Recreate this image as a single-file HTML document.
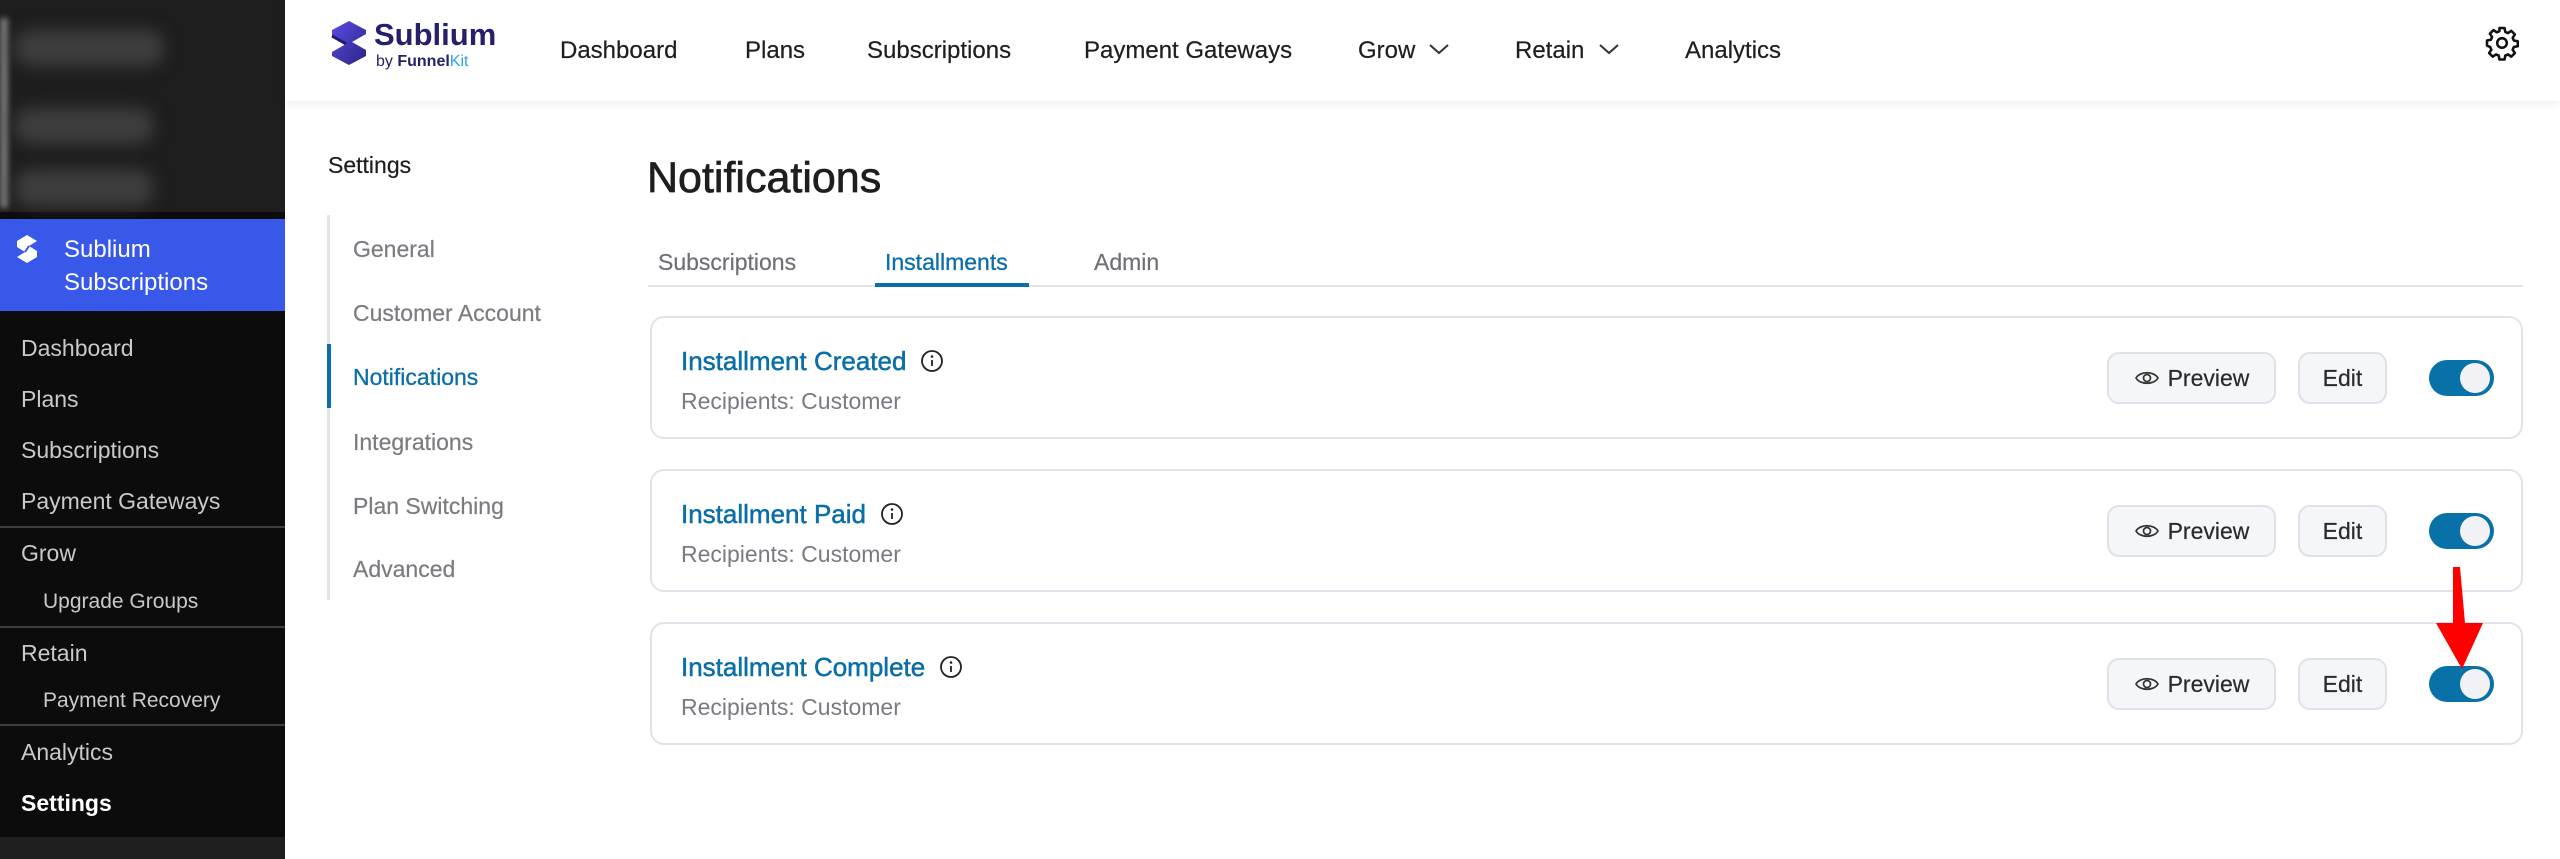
<!DOCTYPE html>
<html><head><meta charset="utf-8"><style>
*{box-sizing:border-box;margin:0;padding:0}
body{width:2560px;height:859px;overflow:hidden;background:#fff;font-family:"Liberation Sans",sans-serif;position:relative}
.abs{position:absolute;white-space:nowrap}
#side{position:absolute;left:0;top:0;width:285px;height:859px;background:#0c0c0c}
.si{position:absolute;left:21px;color:#c9c9cb;font-size:23px;line-height:30px}
.sub{left:43px;font-size:21px}
.sep{position:absolute;left:0;width:285px;height:2px;background:#3a3f44}
#hdr{position:absolute;left:285px;top:0;width:2275px;height:101px;background:#fff;box-shadow:0 3px 8px rgba(0,0,0,0.07)}
.nav{position:absolute;top:36px;font-size:24px;color:#1e1e1e;line-height:30px;-webkit-text-stroke:0.2px #1e1e1e}
.sn{position:absolute;left:353px;font-size:23px;color:#7b7b80;line-height:30px;-webkit-text-stroke:0.2px #7b7b80}
.card{position:absolute;left:650px;width:1873px;height:123px;border:2px solid #e2e2ea;border-radius:14px;background:#fff}
.ct{position:absolute;left:29px;top:27px;font-size:26px;color:#0a6ea8;line-height:32px;white-space:nowrap;-webkit-text-stroke:0.5px #0a6ea8}
.ct svg{vertical-align:-3px;margin-left:14px}
.cr{position:absolute;left:29px;top:68px;font-size:23px;color:#7a7a82;line-height:30px}
.btn{position:absolute;top:34px;height:52px;border:2px solid #e0e0e8;border-radius:12px;background:#f5f6f8;font-size:23px;color:#2a2a2a;display:flex;align-items:center;justify-content:center;-webkit-text-stroke:0.2px #2a2a2a}
.tg{position:absolute;left:1777px;top:42px;width:65px;height:36px;border-radius:18px;background:#0872a8}
.tg::after{content:"";position:absolute;right:4px;top:3px;width:30px;height:30px;border-radius:50%;background:#f2f2f6}
</style></head><body>
<div id="side">
 <div style="position:absolute;left:0;top:0;width:285px;height:212px;background:#1e1e1e"></div>
 <div style="position:absolute;left:0;top:18px;width:8px;height:190px;background:#777;filter:blur(3px)"></div>
 <div style="position:absolute;left:14px;top:30px;width:150px;height:36px;border-radius:18px;background:#3e3e3e;filter:blur(8px)"></div>
 <div style="position:absolute;left:14px;top:108px;width:140px;height:36px;border-radius:18px;background:#3e3e3e;filter:blur(8px)"></div>
 <div style="position:absolute;left:14px;top:170px;width:140px;height:36px;border-radius:18px;background:#3e3e3e;filter:blur(8px)"></div>
 <div style="position:absolute;left:0;top:219px;width:285px;height:92px;background:#3858e9"></div>
 <svg class="abs" style="left:16px;top:234px" width="22" height="30" viewBox="0 0 22 30"><path d="M11 1 L21 7 L13 12 L21 17 L21 23 L11 29 L1 23 L9 18 L1 13 L1 7 Z" fill="#fff"/><path d="M9 18 L13 12" stroke="#3858e9" stroke-width="2"/></svg>
 <div class="si" style="left:64px;top:235px;color:#fff;font-size:24px">Sublium</div>
 <div class="si" style="left:64px;top:268px;color:#fff;font-size:24px">Subscriptions</div>
 <div class="si" style="top:333px">Dashboard</div>
 <div class="si" style="top:384px">Plans</div>
 <div class="si" style="top:435px">Subscriptions</div>
 <div class="si" style="top:486px">Payment Gateways</div>
 <div class="sep" style="top:526px"></div>
 <div class="si" style="top:538px">Grow</div>
 <div class="si sub" style="top:587px">Upgrade Groups</div>
 <div class="sep" style="top:626px"></div>
 <div class="si" style="top:638px">Retain</div>
 <div class="si sub" style="top:686px">Payment Recovery</div>
 <div class="sep" style="top:724px"></div>
 <div class="si" style="top:737px">Analytics</div>
 <div class="si" style="top:788px;color:#fff;font-weight:bold">Settings</div>
 <div style="position:absolute;left:0;top:837px;width:285px;height:22px;background:#1e1e1e"></div>
</div>
<div id="hdr">
 <svg class="abs" style="left:46px;top:20px" width="36" height="46" viewBox="0 0 36 46"><defs><linearGradient id="g" x1="0" y1="0" x2="1" y2="1"><stop offset="0" stop-color="#5b4be8"/><stop offset="1" stop-color="#2a2480"/></linearGradient></defs><path d="M18 1 L35 10 L35 14 L21 22 L35 30 L35 36 L18 45 L1 36 L1 32 L15 24 L1 16 L1 10 Z" fill="url(#g)"/><path d="M1 16 L15 24" stroke="#1f1a6a" stroke-width="3"/></svg>
 <div class="abs" style="left:89px;top:18px;font-size:31px;font-weight:bold;color:#24206b;line-height:34px">Sublium</div>
 <div class="abs" style="left:91px;top:53px;font-size:16px;color:#24206b;line-height:18px">by <b>Funnel</b><span style="color:#2aa4f0">Kit</span></div>
</div>
<div class="nav" style="left:560px">Dashboard</div>
<div class="nav" style="left:745px">Plans</div>
<div class="nav" style="left:867px">Subscriptions</div>
<div class="nav" style="left:1084px">Payment Gateways</div>
<div class="nav" style="left:1358px">Grow</div>
<svg class="abs" style="left:1428px;top:42px" width="22" height="14" viewBox="0 0 22 14"><path d="M2 3 L11 11 L20 3" fill="none" stroke="#333" stroke-width="2"/></svg>
<div class="nav" style="left:1515px">Retain</div>
<svg class="abs" style="left:1598px;top:42px" width="22" height="14" viewBox="0 0 22 14"><path d="M2 3 L11 11 L20 3" fill="none" stroke="#333" stroke-width="2"/></svg>
<div class="nav" style="left:1685px">Analytics</div>
<svg class="abs" style="left:2484px;top:25px" width="36" height="36" viewBox="0 0 24 24"><path d="M10.3 2h3.4l.5 2.6 1.8.8 2.2-1.5 2.4 2.4-1.5 2.2.8 1.8 2.6.5v3.4l-2.6.5-.8 1.8 1.5 2.2-2.4 2.4-2.2-1.5-1.8.8-.5 2.6h-3.4l-.5-2.6-1.8-.8-2.200 1.5-2.4-2.4 1.5-2.2-.8-1.8L2 13.7v-3.4l2.6-.5.8-1.8-1.5-2.2 2.4-2.4 2.2 1.5 1.8-.8z" fill="none" stroke="#111" stroke-width="1.7" stroke-linejoin="round"/><circle cx="12" cy="12" r="3.2" fill="none" stroke="#111" stroke-width="1.7"/></svg>

<div class="abs" style="left:328px;top:152px;font-size:23px;color:#1e1e1e;-webkit-text-stroke:0.2px #1e1e1e">Settings</div>
<div style="position:absolute;left:327px;top:215px;width:3px;height:385px;background:#e4e4ea"></div>
<div style="position:absolute;left:327px;top:344px;width:4px;height:64px;background:#0a6ea8"></div>
<div class="sn" style="top:234px">General</div>
<div class="sn" style="top:298px">Customer Account</div>
<div class="sn" style="top:362px;color:#0a6ea8;-webkit-text-stroke:0.3px #0a6ea8">Notifications</div>
<div class="sn" style="top:427px">Integrations</div>
<div class="sn" style="top:491px">Plan Switching</div>
<div class="sn" style="top:554px">Advanced</div>

<div class="abs" style="left:647px;top:153px;font-size:43px;color:#1e1e1e;line-height:50px;-webkit-text-stroke:0.7px #1e1e1e">Notifications</div>
<div class="abs" style="left:658px;top:249px;font-size:23px;color:#6f6f76;-webkit-text-stroke:0.2px #6f6f76">Subscriptions</div>
<div class="abs" style="left:885px;top:249px;font-size:23px;color:#0a6ea8;-webkit-text-stroke:0.3px #0a6ea8">Installments</div>
<div class="abs" style="left:1094px;top:249px;font-size:23px;color:#6f6f76;-webkit-text-stroke:0.2px #6f6f76">Admin</div>
<div style="position:absolute;left:648px;top:285px;width:1875px;height:2px;background:#e2e2ea"></div>
<div style="position:absolute;left:875px;top:283px;width:154px;height:4px;background:#0a6ea8"></div>

<div class="card" style="top:316px"><div class="ct">Installment Created<svg width="24" height="24" viewBox="0 0 24 24"><circle cx="12" cy="12" r="10" fill="none" stroke="#222" stroke-width="1.8"/><circle cx="12" cy="7.5" r="1.3" fill="#222"/><path d="M12 11v6" stroke="#222" stroke-width="1.8"/></svg></div><div class="cr">Recipients: Customer</div>
<div class="btn" style="left:1455px;width:169px"><svg width="26" height="18" viewBox="0 0 26 18" style="margin-right:8px"><path d="M2 9 C6 2 20 2 24 9 C20 16 6 16 2 9Z" fill="none" stroke="#333" stroke-width="1.7"/><circle cx="13" cy="9" r="3.5" fill="none" stroke="#333" stroke-width="1.7"/></svg>Preview</div>
<div class="btn" style="left:1646px;width:89px">Edit</div><div class="tg"></div></div>

<div class="card" style="top:469px"><div class="ct">Installment Paid<svg width="24" height="24" viewBox="0 0 24 24"><circle cx="12" cy="12" r="10" fill="none" stroke="#222" stroke-width="1.8"/><circle cx="12" cy="7.5" r="1.3" fill="#222"/><path d="M12 11v6" stroke="#222" stroke-width="1.8"/></svg></div><div class="cr">Recipients: Customer</div>
<div class="btn" style="left:1455px;width:169px"><svg width="26" height="18" viewBox="0 0 26 18" style="margin-right:8px"><path d="M2 9 C6 2 20 2 24 9 C20 16 6 16 2 9Z" fill="none" stroke="#333" stroke-width="1.7"/><circle cx="13" cy="9" r="3.5" fill="none" stroke="#333" stroke-width="1.7"/></svg>Preview</div>
<div class="btn" style="left:1646px;width:89px">Edit</div><div class="tg"></div></div>

<div class="card" style="top:622px"><div class="ct">Installment Complete<svg width="24" height="24" viewBox="0 0 24 24"><circle cx="12" cy="12" r="10" fill="none" stroke="#222" stroke-width="1.8"/><circle cx="12" cy="7.5" r="1.3" fill="#222"/><path d="M12 11v6" stroke="#222" stroke-width="1.8"/></svg></div><div class="cr">Recipients: Customer</div>
<div class="btn" style="left:1455px;width:169px"><svg width="26" height="18" viewBox="0 0 26 18" style="margin-right:8px"><path d="M2 9 C6 2 20 2 24 9 C20 16 6 16 2 9Z" fill="none" stroke="#333" stroke-width="1.7"/><circle cx="13" cy="9" r="3.5" fill="none" stroke="#333" stroke-width="1.7"/></svg>Preview</div>
<div class="btn" style="left:1646px;width:89px">Edit</div><div class="tg"></div></div>

<svg class="abs" style="left:2430px;top:562px" width="60" height="112" viewBox="0 0 60 112"><path d="M23 5 L30 5 L35 61 L53 61 L32 107 L6 61 L23 61 Z" fill="#ff0000"/></svg>
</body></html>
